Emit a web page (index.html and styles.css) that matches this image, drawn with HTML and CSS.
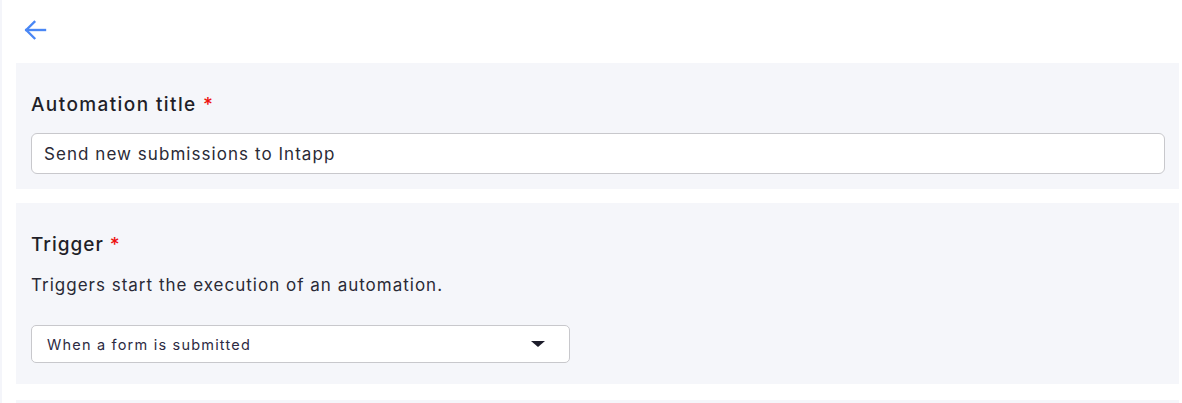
FILE: index.html
```html
<!DOCTYPE html>
<html lang="en">
<head>
<meta charset="utf-8">
<title>Automation</title>
<link rel="stylesheet" href="styles.css">
</head>
<body>
<div class="page">
  <div class="back-row">
    <svg class="back-icon" width="30" height="30" viewBox="0 0 24 24" fill="none" stroke="#4a87f5" stroke-width="1.9" stroke-linecap="square" stroke-linejoin="miter">
      <path d="M20 12H5"/>
      <path d="M11.5 5.5L5 12l6.5 6.5"/>
    </svg>
  </div>
  <div class="panels">
    <section class="panel panel-title">
      <label class="panel-heading">Automation title <span class="req">*</span></label>
      <div class="text-input">Send new submissions to Intapp</div>
    </section>
    <section class="panel panel-trigger">
      <h2 class="panel-heading">Trigger <span class="req">*</span></h2>
      <p class="panel-desc">Triggers start the execution of an automation.</p>
      <div class="select">
        <span class="select-value">When a form is submitted</span>
        <span class="caret"></span>
      </div>
    </section>
    <section class="panel panel-next"></section>
  </div>
</div>
</body>
</html>
```
FILE: styles.css
```css
html, body {
  margin: 0;
  padding: 0;
  background: #ffffff;
}
body {
  font-family: "Inter", "Noto Sans", sans-serif;
  color: #22222c;
}
.page {
  border-left: 2px solid #f4f5fa;
  padding: 0 3px 0 14px;
  min-height: 403px;
  box-sizing: border-box;
}
.back-row {
  display: flex;
  align-items: center;
  height: 63px;
  padding-left: 4px;
  box-sizing: border-box;
}
.back-icon {
  display: block;
  margin-top: -4px;
}
.panels {
  display: flex;
  flex-direction: column;
  gap: 14px;
}
.panel {
  background: #f5f6fa;
  padding: 0 14px 0 15px;
}
.panel-title {
  padding-top: 30px;
  padding-bottom: 15px;
}
.panel-heading {
  display: block;
  margin: 0;
  font-size: 19px;
  font-weight: 500;
  line-height: 24px;
  letter-spacing: 1.4px;
  color: #1f1f28;
}
.panel-title .panel-heading {
  margin-bottom: 16px;
}
.req {
  color: #ee1111;
}
.text-input {
  height: 41px;
  box-sizing: border-box;
  border: 1px solid #c8c8cc;
  border-radius: 6px;
  background: #fff;
  padding: 0 12px;
  display: flex;
  align-items: center;
  font-size: 17px;
  letter-spacing: 1.05px;
  color: #2a2a36;
}
.panel-trigger {
  padding-top: 30px;
  padding-bottom: 21px;
}
.panel-trigger .panel-heading {
  margin-bottom: 16px;
  letter-spacing: 1px;
}
.panel-desc {
  margin: 0 0 28px;
  font-size: 17px;
  line-height: 24px;
  letter-spacing: 1px;
  color: #2a2a36;
}
.select {
  width: 539px;
  height: 38px;
  box-sizing: border-box;
  border: 1px solid #c8c8cc;
  border-radius: 5px;
  background: #fff;
  display: flex;
  align-items: center;
  justify-content: space-between;
  padding: 0 24px 0 15px;
}
.select-value {
  font-size: 14.5px;
  letter-spacing: 1.2px;
  color: #2c2a42;
}
.caret {
  width: 0;
  height: 0;
  border-left: 7px solid transparent;
  border-right: 7px solid transparent;
  border-top: 6px solid #1c1c2a;
}
.panel-next {
  margin-top: 2px;
  height: 20px;
}
```
